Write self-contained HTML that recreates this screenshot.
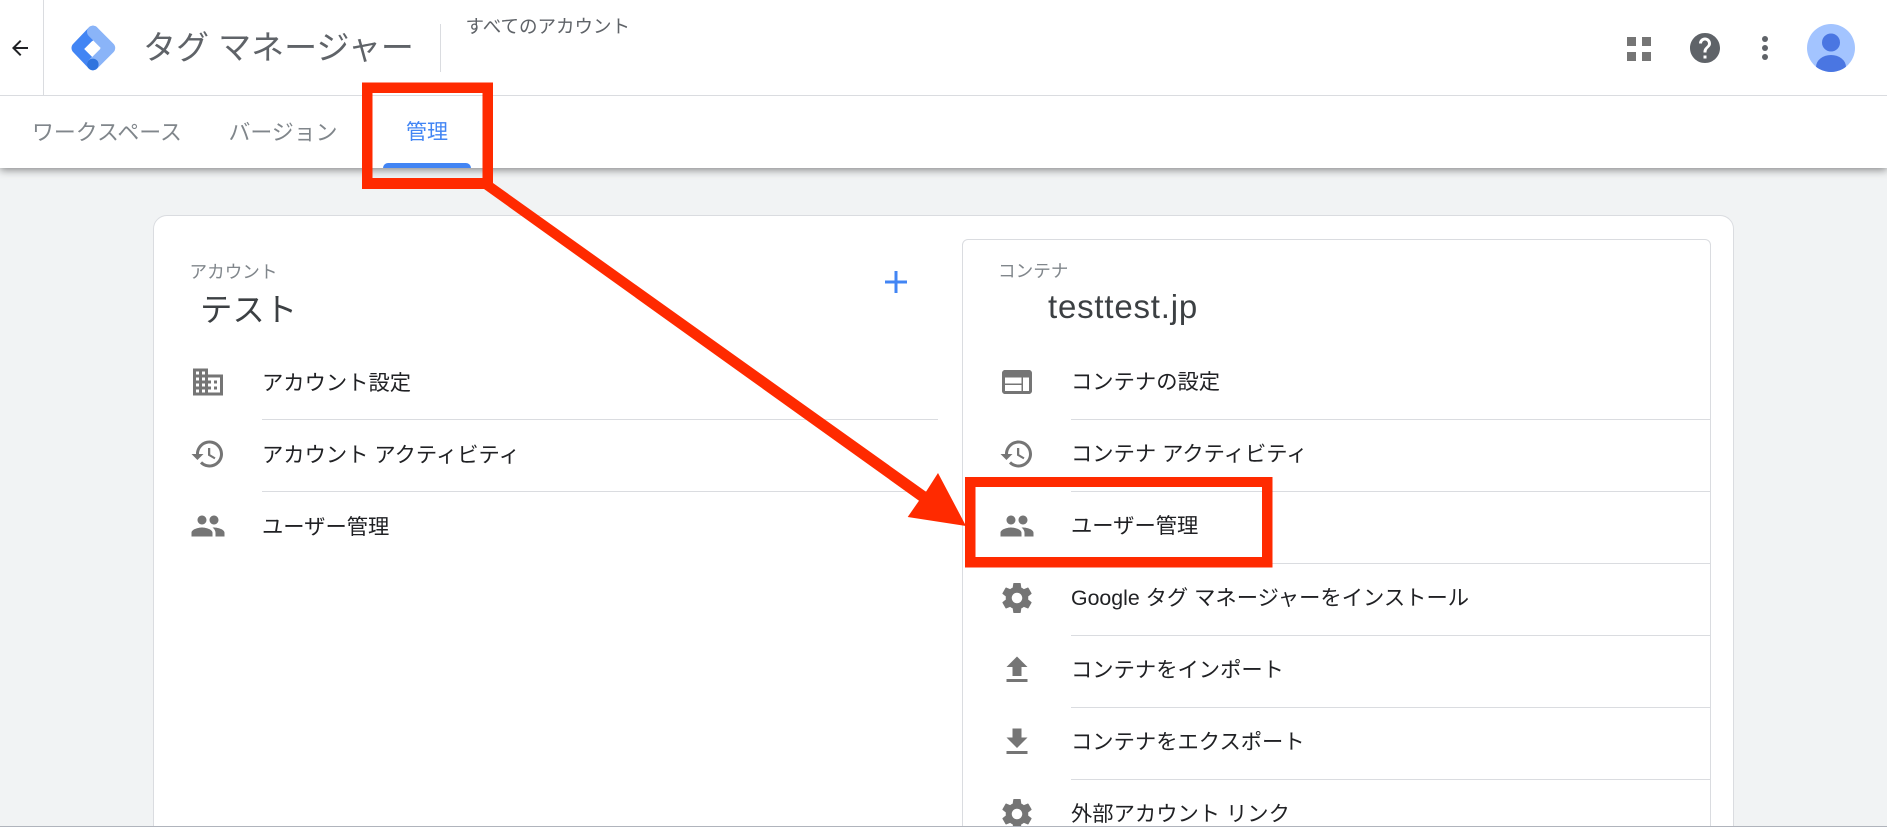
<!DOCTYPE html>
<html lang="ja">
<head>
<meta charset="utf-8">
<title>タグ マネージャー</title>
<style>
html,body{margin:0;padding:0;width:1887px;height:827px;overflow:hidden;background:#f1f3f4;}
body{position:relative;font-family:"Liberation Sans","Noto Sans CJK JP",sans-serif;color:#202124;}
.t{position:absolute;white-space:nowrap;line-height:40px;height:40px;}
.abs{position:absolute;}
.hr{position:absolute;height:1px;background:#dadce0;}
.i{position:absolute;width:36px;height:36px;fill:#757575;}
.row{font-size:21.3px;color:#202124;}
</style>
</head>
<body>
<!-- header -->
<div class="abs" style="left:0;top:0;width:1887px;height:168px;background:#fff;box-shadow:0 2px 8px rgba(0,0,0,.45);"></div>
<div class="abs" style="left:0;top:95px;width:1887px;height:1px;background:#dadce0;"></div>
<div class="abs" style="left:43px;top:0;width:1px;height:95px;background:#dadce0;"></div>
<svg class="abs" style="left:8px;top:36px;width:24px;height:24px;" viewBox="0 0 24 24"><path d="M20 11H7.83l5.59-5.59L12 4l-8 8 8 8 1.41-1.41L7.83 13H20z" fill="#202124"/></svg>
<svg class="abs" style="left:60px;top:18px;width:66px;height:60px;" viewBox="0 0 66 60">
<path d="M33 13.8 L17.5 30 L33 46.2" fill="none" stroke="#4285f4" stroke-width="12" stroke-linecap="round" stroke-linejoin="round"/>
<path d="M33 13.8 L49.2 30 L33 46.2" fill="none" stroke="#8ab4f8" stroke-width="12" stroke-linecap="round" stroke-linejoin="round"/>
<polygon points="32.2,23 40.2,31 32.2,39 24.2,31" fill="#fff"/>
<circle cx="32.8" cy="46.4" r="5.8" fill="#2f74de"/>
</svg>
<div class="t" style="left:143px;top:27.5px;font-size:33px;color:#5f6368;">タグ マネージャー</div>
<div class="abs" style="left:440px;top:24px;width:1px;height:48px;background:#dadce0;"></div>
<div class="t" style="left:465.5px;top:7px;font-size:18.5px;color:#5f6368;">すべてのアカウント</div>
<div class="t" style="left:32px;top:112.5px;font-size:21.9px;color:#80868b;">ワークスペース</div>
<div class="t" style="left:228.5px;top:112.5px;font-size:21.9px;color:#80868b;">バージョン</div>
<div class="t" style="left:406px;top:112.5px;font-size:21px;color:#4285f4;">管理</div>
<div class="abs" style="left:383px;top:163px;width:88px;height:5px;background:#4285f4;border-radius:5px 5px 0 0;"></div>
<!-- header right -->
<svg class="abs" style="left:1627px;top:37px;width:24px;height:24px;" viewBox="0 0 24 24" fill="#757575"><rect width="9" height="9"/><rect x="15" width="9" height="9"/><rect y="15" width="9" height="9"/><rect x="15" y="15" width="9" height="9"/></svg>
<svg class="abs" style="left:1687px;top:30px;width:36px;height:36px;" viewBox="0 0 24 24"><path fill="#5f6368" d="M12 2C6.48 2 2 6.48 2 12s4.48 10 10 10 10-4.48 10-10S17.52 2 12 2zm1 17h-2v-2h2v2zm2.07-7.75l-.9.92C13.45 12.9 13 13.5 13 15h-2v-.5c0-1.1.45-2.1 1.17-2.83l1.24-1.26c.37-.36.59-.86.59-1.41 0-1.1-.9-2-2-2s-2 .9-2 2H8c0-2.21 1.79-4 4-4s4 1.79 4 4c0 .88-.36 1.68-.93 2.25z"/></svg>
<svg class="abs" style="left:1759px;top:36px;width:12px;height:24px;" viewBox="0 0 12 24" fill="#5f6368"><circle cx="6" cy="3" r="3"/><circle cx="6" cy="12" r="3"/><circle cx="6" cy="21" r="3"/></svg>
<svg class="abs" style="left:1807px;top:24px;width:48px;height:48px;" viewBox="0 0 48 48">
<defs><clipPath id="c"><circle cx="24" cy="24" r="24"/></clipPath></defs>
<circle cx="24" cy="24" r="24" fill="#a3c4ff"/>
<g clip-path="url(#c)" fill="#4a76e2"><circle cx="24" cy="18.5" r="9"/><ellipse cx="24" cy="43" rx="15" ry="12"/></g>
</svg>
<!-- left card -->
<div class="abs" style="left:153px;top:215px;width:1581px;height:640px;background:#fff;border:1px solid #dadce0;border-radius:14px;box-sizing:border-box;"></div>
<div class="t" style="left:189.5px;top:252px;font-size:17.6px;color:#80868b;">アカウント</div>
<div class="t" style="left:200px;top:289.5px;font-size:32.4px;color:#3c4043;">テスト</div>
<svg class="abs" style="left:885px;top:271px;width:22px;height:22px;" viewBox="0 0 22 22"><path d="M0 11h22M11 0v22" stroke="#4285f4" stroke-width="3" fill="none"/></svg>
<svg class="i" style="left:190px;top:364px;" viewBox="0 0 24 24"><path d="M12 7V3H2v18h20V7H12zM6 19H4v-2h2v2zm0-4H4v-2h2v2zm0-4H4V9h2v2zm0-4H4V5h2v2zm4 12H8v-2h2v2zm0-4H8v-2h2v2zm0-4H8V9h2v2zm0-4H8V5h2v2zm10 12h-8v-2h2v-2h-2v-2h2v-2h-2V9h8v10zm-2-8h-2v2h2v-2zm0 4h-2v2h2v-2z"/></svg>
<div class="t row" style="left:262px;top:363px;">アカウント設定</div>
<div class="hr" style="left:262px;top:419px;width:676px;"></div>
<svg class="i" style="left:190px;top:436px;" viewBox="0 0 24 24"><path d="M13 3c-4.97 0-9 4.03-9 9H1l3.89 3.89.07.14L9 12H6c0-3.87 3.13-7 7-7s7 3.13 7 7-3.13 7-7 7c-1.93 0-3.68-.79-4.94-2.06l-1.42 1.42C8.27 19.99 10.51 21 13 21c4.97 0 9-4.03 9-9s-4.03-9-9-9zm-1 5v5l4.28 2.54.72-1.21-3.5-2.08V8H12z"/></svg>
<div class="t row" style="left:262px;top:435px;">アカウント アクティビティ</div>
<div class="hr" style="left:262px;top:491px;width:676px;"></div>
<svg class="i" style="left:190px;top:508px;" viewBox="0 0 24 24"><path d="M16 11c1.66 0 2.99-1.34 2.99-3S17.66 5 16 5c-1.66 0-3 1.34-3 3s1.34 3 3 3zm-8 0c1.66 0 2.99-1.34 2.99-3S9.66 5 8 5C6.34 5 5 6.34 5 8s1.34 3 3 3zm0 2c-2.33 0-7 1.17-7 3.5V19h14v-2.5c0-2.33-4.67-3.5-7-3.5zm8 0c-.29 0-.62.02-.97.05 1.16.84 1.97 1.97 1.97 3.45V19h6v-2.5c0-2.33-4.67-3.5-7-3.5z"/></svg>
<div class="t row" style="left:262px;top:507px;">ユーザー管理</div>
<!-- right card -->
<div class="abs" style="left:962px;top:239px;width:749px;height:620px;background:#fff;border:1px solid #dadce0;border-radius:6px;box-sizing:border-box;"></div>
<div class="t" style="left:998px;top:250.5px;font-size:17.6px;color:#80868b;">コンテナ</div>
<div class="t" style="left:1048px;top:287px;font-size:33px;letter-spacing:.8px;color:#3c4043;">testtest.jp</div>
<svg class="i" style="left:999px;top:364px;" viewBox="0 0 24 24"><path d="M20 4H4c-1.1 0-1.99.9-1.99 2L2 18c0 1.1.9 2 2 2h16c1.1 0 2-.9 2-2V6c0-1.1-.9-2-2-2zm-5 14H4v-4h11v4zm0-5H4V9h11v4zm5 5h-4V9h4v9z"/></svg>
<div class="t row" style="left:1071px;top:362px;">コンテナの設定</div>
<div class="hr" style="left:1071px;top:419px;width:639px;"></div>
<svg class="i" style="left:999px;top:436px;" viewBox="0 0 24 24"><path d="M13 3c-4.97 0-9 4.03-9 9H1l3.89 3.89.07.14L9 12H6c0-3.87 3.13-7 7-7s7 3.13 7 7-3.13 7-7 7c-1.93 0-3.68-.79-4.94-2.06l-1.42 1.42C8.27 19.99 10.51 21 13 21c4.97 0 9-4.03 9-9s-4.03-9-9-9zm-1 5v5l4.28 2.54.72-1.21-3.5-2.08V8H12z"/></svg>
<div class="t row" style="left:1071px;top:434px;">コンテナ アクティビティ</div>
<div class="hr" style="left:1071px;top:491px;width:639px;"></div>
<svg class="i" style="left:999px;top:508px;" viewBox="0 0 24 24"><path d="M16 11c1.66 0 2.99-1.34 2.99-3S17.66 5 16 5c-1.66 0-3 1.34-3 3s1.34 3 3 3zm-8 0c1.66 0 2.99-1.34 2.99-3S9.66 5 8 5C6.34 5 5 6.34 5 8s1.34 3 3 3zm0 2c-2.33 0-7 1.17-7 3.5V19h14v-2.5c0-2.33-4.67-3.5-7-3.5zm8 0c-.29 0-.62.02-.97.05 1.16.84 1.97 1.97 1.97 3.45V19h6v-2.5c0-2.33-4.67-3.5-7-3.5z"/></svg>
<div class="t row" style="left:1071px;top:506px;">ユーザー管理</div>
<div class="hr" style="left:1071px;top:563px;width:639px;"></div>
<svg class="i" style="left:999px;top:580px;" viewBox="0 0 24 24"><path d="M19.43 12.98c.04-.32.07-.64.07-.98s-.03-.66-.07-.98l2.11-1.65c.19-.15.24-.42.12-.64l-2-3.46c-.12-.22-.39-.3-.61-.22l-2.49 1c-.52-.4-1.08-.73-1.69-.98l-.38-2.65C14.46 2.18 14.25 2 14 2h-4c-.25 0-.46.18-.49.42l-.38 2.65c-.61.25-1.17.59-1.69.98l-2.49-1c-.23-.09-.49 0-.61.22l-2 3.46c-.13.22-.07.49.12.64l2.11 1.65c-.04.32-.07.65-.07.98s.03.66.07.98l-2.11 1.65c-.19.15-.24.42-.12.64l2 3.46c.12.22.39.3.61.22l2.49-1c.52.4 1.08.73 1.69.98l.38 2.65c.03.24.24.42.49.42h4c.25 0 .46-.18.49-.42l.38-2.65c.61-.25 1.17-.59 1.69-.98l2.49 1c.23.09.49 0 .61-.22l2-3.46c.12-.22.07-.49-.12-.64l-2.11-1.65zM12 15.5c-1.93 0-3.5-1.57-3.5-3.5s1.57-3.5 3.5-3.5 3.5 1.57 3.5 3.5-1.57 3.5-3.5 3.5z"/></svg>
<div class="t row" style="left:1071px;top:578px;">Google タグ マネージャーをインストール</div>
<div class="hr" style="left:1071px;top:635px;width:639px;"></div>
<svg class="i" style="left:999px;top:652px;" viewBox="0 0 24 24"><path d="M9 16h6v-6h4l-7-7-7 7h4zm-4 2h14v2H5z"/></svg>
<div class="t row" style="left:1071px;top:650px;">コンテナをインポート</div>
<div class="hr" style="left:1071px;top:707px;width:639px;"></div>
<svg class="i" style="left:999px;top:724px;" viewBox="0 0 24 24"><path d="M19 9h-4V3H9v6H5l7 7 7-7zM5 18v2h14v-2H5z"/></svg>
<div class="t row" style="left:1071px;top:722px;">コンテナをエクスポート</div>
<div class="hr" style="left:1071px;top:779px;width:639px;"></div>
<svg class="i" style="left:999px;top:796px;" viewBox="0 0 24 24"><path d="M19.43 12.98c.04-.32.07-.64.07-.98s-.03-.66-.07-.98l2.11-1.65c.19-.15.24-.42.12-.64l-2-3.46c-.12-.22-.39-.3-.61-.22l-2.49 1c-.52-.4-1.08-.73-1.69-.98l-.38-2.65C14.46 2.18 14.25 2 14 2h-4c-.25 0-.46.18-.49.42l-.38 2.65c-.61.25-1.17.59-1.69.98l-2.49-1c-.23-.09-.49 0-.61.22l-2 3.46c-.13.22-.07.49.12.64l2.11 1.65c-.04.32-.07.65-.07.98s.03.66.07.98l-2.11 1.65c-.19.15-.24.42-.12.64l2 3.46c.12.22.39.3.61.22l2.49-1c.52.4 1.08.73 1.69.98l.38 2.65c.03.24.24.42.49.42h4c.25 0 .46-.18.49-.42l.38-2.65c.61-.25 1.17-.59 1.69-.98l2.49 1c.23.09.49 0 .61-.22l2-3.46c.12-.22.07-.49-.12-.64l-2.11-1.65zM12 15.5c-1.93 0-3.5-1.57-3.5-3.5s1.57-3.5 3.5-3.5 3.5 1.57 3.5 3.5-1.57 3.5-3.5 3.5z"/></svg>
<div class="t row" style="left:1071px;top:794px;">外部アカウント リンク</div>
<!-- bottom line -->
<div class="abs" style="left:0;top:826px;width:1887px;height:1px;background:#b0b4bc;"></div>
<!-- annotations -->
<svg class="abs" style="left:0;top:0;width:1887px;height:827px;" viewBox="0 0 1887 827">
<path fill="#ff2a00" fill-rule="evenodd" d="M362 82.5H493V189H362ZM372.5 93V178H482.5V93Z"/>
<path fill="#ff2a00" fill-rule="evenodd" d="M965 477H1272.5V567.5H965ZM975.5 487V557H1262V487Z"/>
<path fill="#ff2a00" d="M493 183 926 491.7 938 473 966 526 907.7 517 919 500.7 484 189Z"/>
</svg>
</body>
</html>
